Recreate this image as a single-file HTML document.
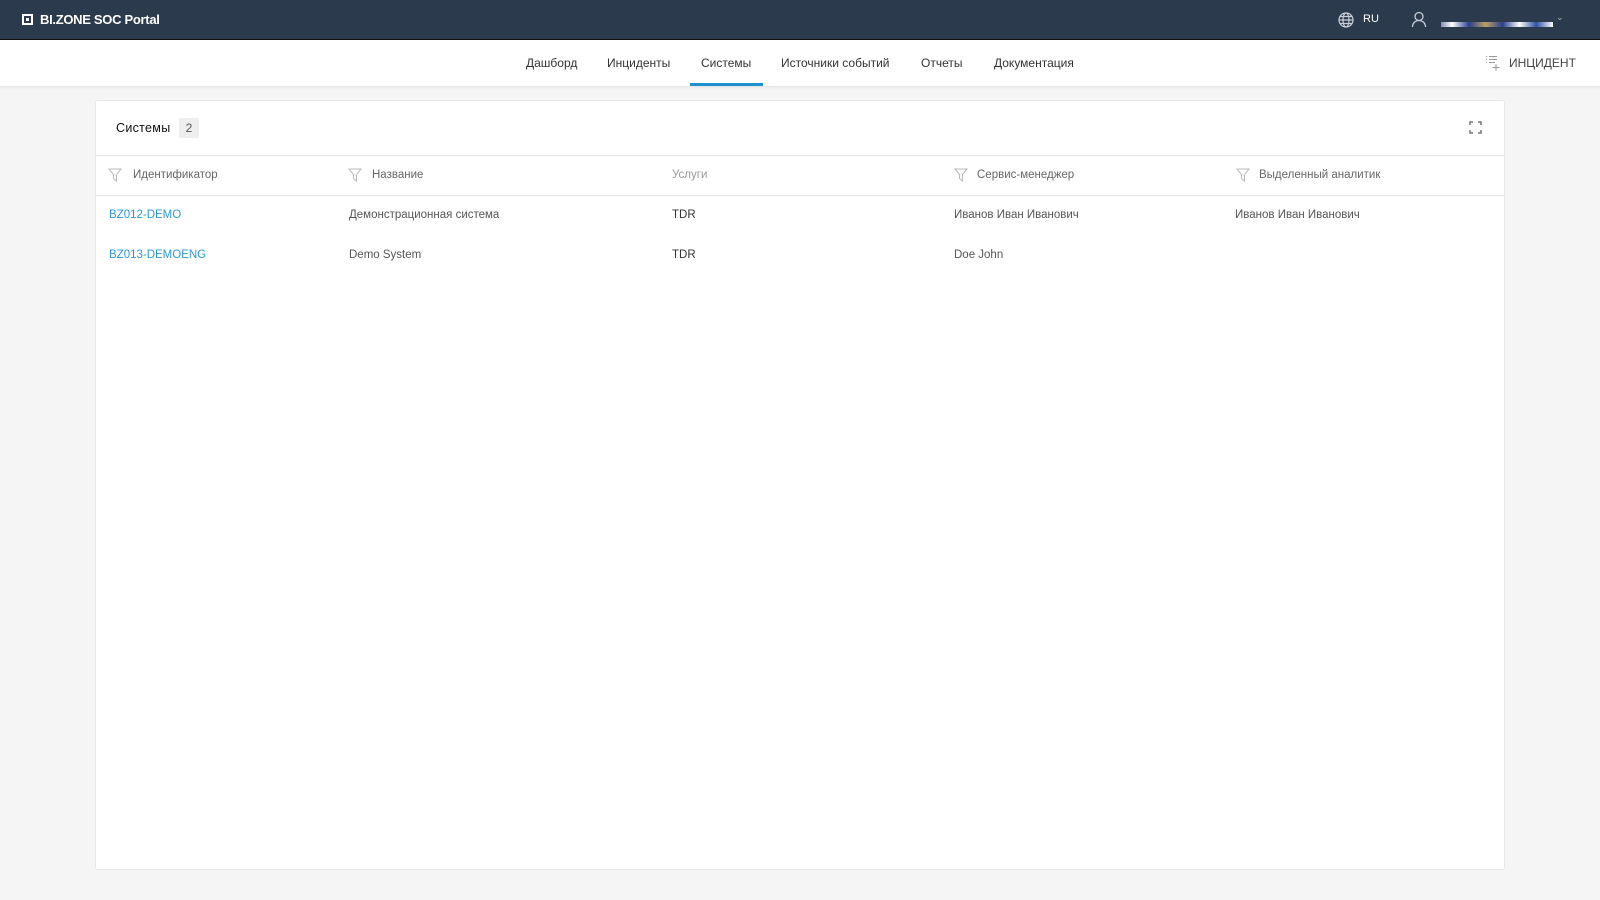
<!DOCTYPE html>
<html><head><meta charset="utf-8"><style>
*{box-sizing:border-box;margin:0;padding:0}
body{width:1600px;height:900px;background:#f5f5f5;font-family:"Liberation Sans",sans-serif;position:relative;overflow:hidden;color:#444}
.top{position:absolute;left:0;top:0;width:1600px;height:40px;background:#2b3a4d;border-bottom:1px solid #111}
.abs{position:absolute;white-space:nowrap}
.nav{position:absolute;left:0;top:40px;width:1600px;height:47px;background:#fff;border-bottom:1px solid #e6e6e6;box-shadow:0 1px 2px rgba(0,0,0,.05)}
.nav .abs{top:16px;font-size:12px;color:#333}
.card{position:absolute;left:95px;top:100px;width:1410px;height:770px;background:#fff;border:1px solid #e8e8e8;border-radius:3px}
.hl{position:absolute;left:0;width:100%;height:1px;background:#e8e8e8}
.th{font-size:11.5px;color:#666}
.td{font-size:11.5px;color:#555}
a{color:#2a9bd4;text-decoration:none}
</style></head><body>
<div class="top">
 <svg class="abs" style="left:22px;top:14px" width="11" height="11"><rect x="1" y="1" width="9" height="9" fill="none" stroke="#fff" stroke-width="2"/><rect x="4" y="4" width="3" height="3" fill="#fff"/></svg>
 <div class="abs" style="left:40px;top:12px;color:#fff;font-weight:bold;font-size:13px;letter-spacing:-0.3px">BI.ZONE SOC Portal</div>
 <svg class="abs" style="left:1338px;top:12px" width="16" height="16" fill="none" stroke="#c8ced6" stroke-width="1.2"><circle cx="8" cy="8" r="7"/><ellipse cx="8" cy="8" rx="3" ry="7"/><path d="M1 8h14M2 4.5h12M2 11.5h12"/></svg>
 <div class="abs" style="left:1363px;top:13px;color:#fff;font-size:11px">RU</div>
 <svg class="abs" style="left:1411px;top:11px" width="16" height="17" fill="none" stroke="#c8ced6" stroke-width="1.3"><circle cx="8" cy="5.5" r="4"/><path d="M1.5 16c0-4 3-6.5 6.5-6.5s6.5 2.5 6.5 6.5"/></svg>
 <div class="abs" style="left:1441px;top:22px;width:112px;height:5px;background:linear-gradient(90deg,#8090b0,#fff 10%,#2a3f90 25%,#c0a060 40%,#2a3f90 55%,#fff 70%,#3050a0 85%,#fff)"></div>
 <div class="abs" style="left:1556px;top:12px;color:#aab;font-size:9px">&#8964;</div>
</div>
<div class="nav">
 <div class="abs" style="left:526px">Дашборд</div>
 <div class="abs" style="left:607px">Инциденты</div>
 <div class="abs" style="left:701px">Системы</div>
 <div class="abs" style="left:781px">Источники событий</div>
 <div class="abs" style="left:921px">Отчеты</div>
 <div class="abs" style="left:994px">Документация</div>
 <div class="abs" style="left:690px;top:43px;width:73px;height:3px;background:#1e8fcf"></div>
 <svg class="abs" style="left:1485px;top:15px" width="16" height="16" fill="none" stroke="#999" stroke-width="1"><path d="M1 1.5h1M1 4.5h1M1 7.5h1M4 1.5h8M4 4.5h8M4 7.5h6M11 9v7M7.5 12.5h7"/></svg>
 <div class="abs" style="left:1509px;color:#444">ИНЦИДЕНТ</div>
</div>
<div class="card">
 <div class="abs" style="left:20px;top:20px;font-size:12.5px;color:#111;letter-spacing:0.3px">Системы</div>
 <div class="abs" style="left:83px;top:17px;width:20px;height:20px;background:#eee;border-radius:2px;font-size:12px;text-align:center;line-height:20px;color:#555">2</div>
 <svg class="abs" style="left:1373px;top:20px" width="13" height="13" fill="none" stroke="#777" stroke-width="1.5"><path d="M1 4V1h3M9 1h3v3M12 9v3H9M4 12H1V9"/></svg>
 <div class="hl" style="top:54px"></div>
 <div class="hl" style="top:94px"></div>
 <svg class="abs" style="left:12px;top:67px" width="14" height="14" fill="none" stroke="#bbb"><path d="M1 1h12L8.5 6.5V13L5.5 10.5V6.5z"/></svg>
 <div class="abs th" style="left:37px;top:68px">Идентификатор</div>
 <svg class="abs" style="left:252px;top:67px" width="14" height="14" fill="none" stroke="#bbb"><path d="M1 1h12L8.5 6.5V13L5.5 10.5V6.5z"/></svg>
 <div class="abs th" style="left:276px;top:68px">Название</div>
 <div class="abs th" style="left:576px;top:68px;color:#999">Услуги</div>
 <svg class="abs" style="left:858px;top:67px" width="14" height="14" fill="none" stroke="#bbb"><path d="M1 1h12L8.5 6.5V13L5.5 10.5V6.5z"/></svg>
 <div class="abs th" style="left:881px;top:68px">Сервис-менеджер</div>
 <svg class="abs" style="left:1140px;top:67px" width="14" height="14" fill="none" stroke="#bbb"><path d="M1 1h12L8.5 6.5V13L5.5 10.5V6.5z"/></svg>
 <div class="abs th" style="left:1163px;top:68px">Выделенный аналитик</div>
 <div class="abs td" style="left:13px;top:108px"><a>BZ012-DEMO</a></div>
 <div class="abs td" style="left:253px;top:108px">Демонстрационная система</div>
 <div class="abs td" style="left:576px;top:108px;color:#333">TDR</div>
 <div class="abs td" style="left:858px;top:108px">Иванов Иван Иванович</div>
 <div class="abs td" style="left:1139px;top:108px">Иванов Иван Иванович</div>
 <div class="abs td" style="left:13px;top:148px"><a>BZ013-DEMOENG</a></div>
 <div class="abs td" style="left:253px;top:148px">Demo System</div>
 <div class="abs td" style="left:576px;top:148px;color:#333">TDR</div>
 <div class="abs td" style="left:858px;top:148px">Doe John</div>
</div>
</body></html>
